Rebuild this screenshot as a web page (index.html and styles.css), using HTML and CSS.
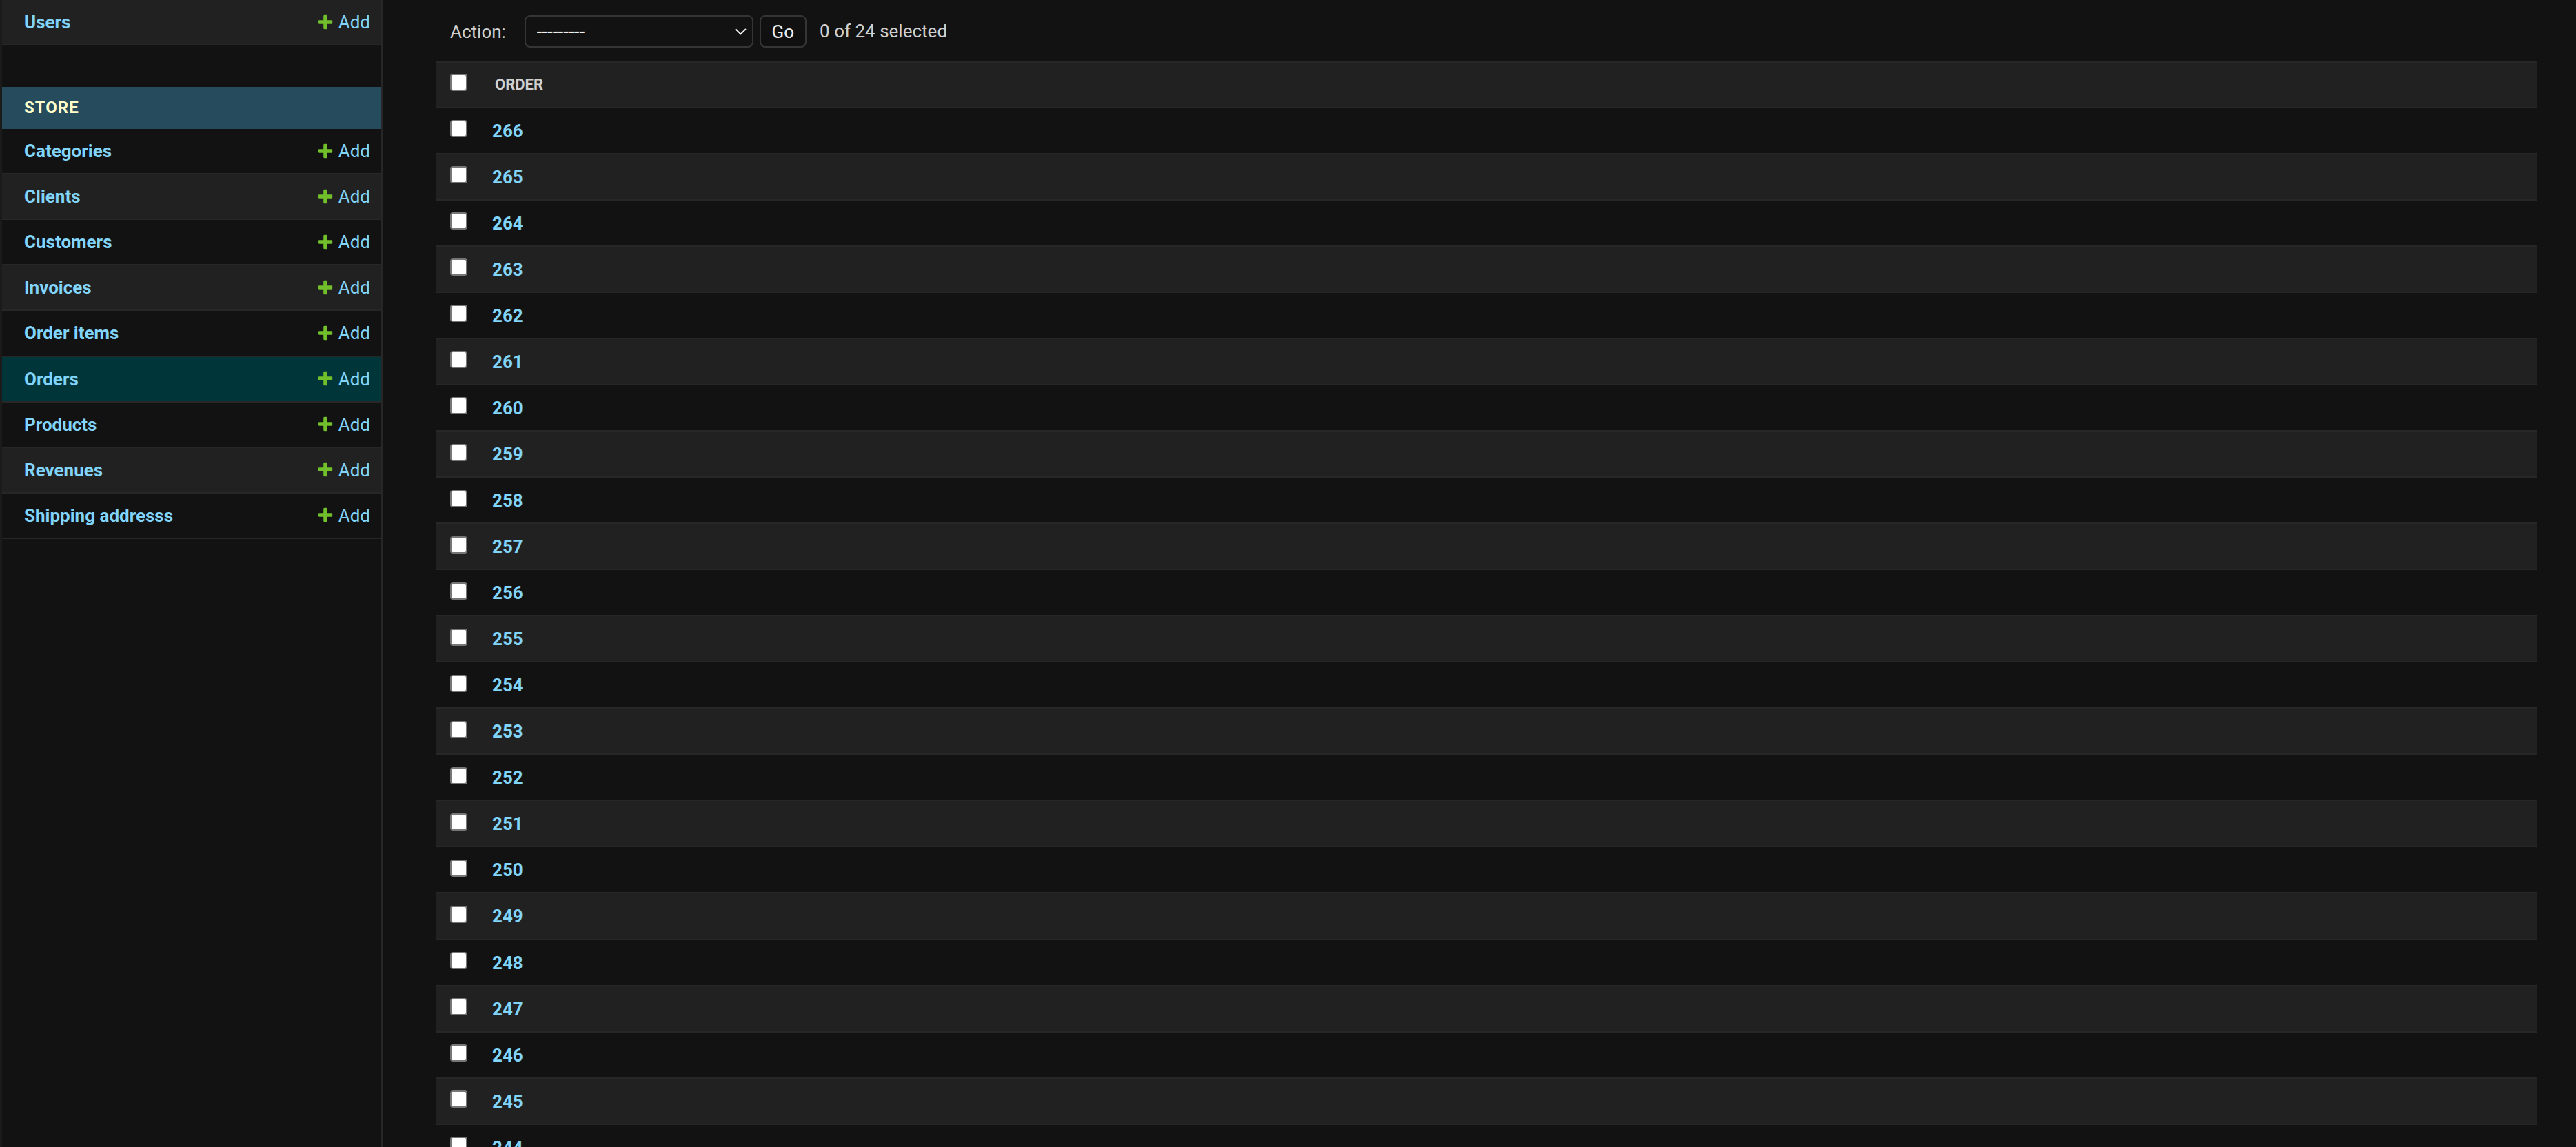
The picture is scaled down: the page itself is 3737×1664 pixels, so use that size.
FILE: index.html
```html
<!DOCTYPE html>
<html lang="en">
<head>
<meta charset="utf-8">
<title>Select order to change | Django site admin</title>
<link rel="stylesheet" href="styles.css">
</head>
<body>
<div class="main">
  <nav class="sidebar">
    <table class="module auth">
      <tbody>
        <tr class="alt"><th scope="row"><a href="#">Users</a></th><td><a class="addlink" href="#"><svg class="icon-add" width="26" height="26" viewBox="0 0 1792 1792"><path fill="#70bf2b" d="M1600 796v192q0 40-28 68t-68 28h-416v416q0 40-28 68t-68 28h-192q-40 0-68-28t-28-68v-416h-416q-40 0-68-28t-28-68v-192q0-40 28-68t68-28h416v-416q0-40 28-68t68-28h192q40 0 68 28t28 68v416h416q40 0 68 28t28 68z"/></svg>Add</a></td></tr>
      </tbody>
    </table>
    <table class="module store">
      <caption><a class="section" href="#">Store</a></caption>
      <tbody>
        <tr><th scope="row"><a href="#">Categories</a></th><td><a class="addlink" href="#"><svg class="icon-add" width="26" height="26" viewBox="0 0 1792 1792"><path fill="#70bf2b" d="M1600 796v192q0 40-28 68t-68 28h-416v416q0 40-28 68t-68 28h-192q-40 0-68-28t-28-68v-416h-416q-40 0-68-28t-28-68v-192q0-40 28-68t68-28h416v-416q0-40 28-68t68-28h192q40 0 68 28t28 68v416h416q40 0 68 28t28 68z"/></svg>Add</a></td></tr>
        <tr><th scope="row"><a href="#">Clients</a></th><td><a class="addlink" href="#"><svg class="icon-add" width="26" height="26" viewBox="0 0 1792 1792"><path fill="#70bf2b" d="M1600 796v192q0 40-28 68t-68 28h-416v416q0 40-28 68t-68 28h-192q-40 0-68-28t-28-68v-416h-416q-40 0-68-28t-28-68v-192q0-40 28-68t68-28h416v-416q0-40 28-68t68-28h192q40 0 68 28t28 68v416h416q40 0 68 28t28 68z"/></svg>Add</a></td></tr>
        <tr><th scope="row"><a href="#">Customers</a></th><td><a class="addlink" href="#"><svg class="icon-add" width="26" height="26" viewBox="0 0 1792 1792"><path fill="#70bf2b" d="M1600 796v192q0 40-28 68t-68 28h-416v416q0 40-28 68t-68 28h-192q-40 0-68-28t-28-68v-416h-416q-40 0-68-28t-28-68v-192q0-40 28-68t68-28h416v-416q0-40 28-68t68-28h192q40 0 68 28t28 68v416h416q40 0 68 28t28 68z"/></svg>Add</a></td></tr>
        <tr><th scope="row"><a href="#">Invoices</a></th><td><a class="addlink" href="#"><svg class="icon-add" width="26" height="26" viewBox="0 0 1792 1792"><path fill="#70bf2b" d="M1600 796v192q0 40-28 68t-68 28h-416v416q0 40-28 68t-68 28h-192q-40 0-68-28t-28-68v-416h-416q-40 0-68-28t-28-68v-192q0-40 28-68t68-28h416v-416q0-40 28-68t68-28h192q40 0 68 28t28 68v416h416q40 0 68 28t28 68z"/></svg>Add</a></td></tr>
        <tr><th scope="row"><a href="#">Order items</a></th><td><a class="addlink" href="#"><svg class="icon-add" width="26" height="26" viewBox="0 0 1792 1792"><path fill="#70bf2b" d="M1600 796v192q0 40-28 68t-68 28h-416v416q0 40-28 68t-68 28h-192q-40 0-68-28t-28-68v-416h-416q-40 0-68-28t-28-68v-192q0-40 28-68t68-28h416v-416q0-40 28-68t68-28h192q40 0 68 28t28 68v416h416q40 0 68 28t28 68z"/></svg>Add</a></td></tr>
        <tr class="current"><th scope="row"><a href="#">Orders</a></th><td><a class="addlink" href="#"><svg class="icon-add" width="26" height="26" viewBox="0 0 1792 1792"><path fill="#70bf2b" d="M1600 796v192q0 40-28 68t-68 28h-416v416q0 40-28 68t-68 28h-192q-40 0-68-28t-28-68v-416h-416q-40 0-68-28t-28-68v-192q0-40 28-68t68-28h416v-416q0-40 28-68t68-28h192q40 0 68 28t28 68v416h416q40 0 68 28t28 68z"/></svg>Add</a></td></tr>
        <tr><th scope="row"><a href="#">Products</a></th><td><a class="addlink" href="#"><svg class="icon-add" width="26" height="26" viewBox="0 0 1792 1792"><path fill="#70bf2b" d="M1600 796v192q0 40-28 68t-68 28h-416v416q0 40-28 68t-68 28h-192q-40 0-68-28t-28-68v-416h-416q-40 0-68-28t-28-68v-192q0-40 28-68t68-28h416v-416q0-40 28-68t68-28h192q40 0 68 28t28 68v416h416q40 0 68 28t28 68z"/></svg>Add</a></td></tr>
        <tr><th scope="row"><a href="#">Revenues</a></th><td><a class="addlink" href="#"><svg class="icon-add" width="26" height="26" viewBox="0 0 1792 1792"><path fill="#70bf2b" d="M1600 796v192q0 40-28 68t-68 28h-416v416q0 40-28 68t-68 28h-192q-40 0-68-28t-28-68v-416h-416q-40 0-68-28t-28-68v-192q0-40 28-68t68-28h416v-416q0-40 28-68t68-28h192q40 0 68 28t28 68v416h416q40 0 68 28t28 68z"/></svg>Add</a></td></tr>
        <tr><th scope="row"><a href="#">Shipping addresss</a></th><td><a class="addlink" href="#"><svg class="icon-add" width="26" height="26" viewBox="0 0 1792 1792"><path fill="#70bf2b" d="M1600 796v192q0 40-28 68t-68 28h-416v416q0 40-28 68t-68 28h-192q-40 0-68-28t-28-68v-416h-416q-40 0-68-28t-28-68v-192q0-40 28-68t68-28h416v-416q0-40 28-68t68-28h192q40 0 68 28t28 68v416h416q40 0 68 28t28 68z"/></svg>Add</a></td></tr>
      </tbody>
    </table>
  </nav>
  <div class="content">
    <div class="actions">
      <label class="action-label" for="action">Action:</label>
      <div class="select-wrap">
        <select id="action" class="action-select"><option>---------</option><option>Delete selected orders</option></select>
        <svg class="chevron" width="17" height="10" viewBox="0 0 17 10"><polyline points="1,1 8.5,8.5 16,1" fill="none" stroke="#eeeeee" stroke-width="1.8"/></svg>
      </div>
      <button class="button" type="button">Go</button>
      <span class="action-counter">0 of 24 selected</span>
    </div>
    <table class="result-list">
      <colgroup><col class="col-cb"><col></colgroup>
      <thead>
        <tr><th class="cb"><input type="checkbox" aria-label="Select all"></th><th class="col-order">Order</th></tr>
      </thead>
      <tbody>
        <tr><td class="cb"><input type="checkbox"></td><th><a href="#">266</a></th></tr>
        <tr><td class="cb"><input type="checkbox"></td><th><a href="#">265</a></th></tr>
        <tr><td class="cb"><input type="checkbox"></td><th><a href="#">264</a></th></tr>
        <tr><td class="cb"><input type="checkbox"></td><th><a href="#">263</a></th></tr>
        <tr><td class="cb"><input type="checkbox"></td><th><a href="#">262</a></th></tr>
        <tr><td class="cb"><input type="checkbox"></td><th><a href="#">261</a></th></tr>
        <tr><td class="cb"><input type="checkbox"></td><th><a href="#">260</a></th></tr>
        <tr><td class="cb"><input type="checkbox"></td><th><a href="#">259</a></th></tr>
        <tr><td class="cb"><input type="checkbox"></td><th><a href="#">258</a></th></tr>
        <tr><td class="cb"><input type="checkbox"></td><th><a href="#">257</a></th></tr>
        <tr><td class="cb"><input type="checkbox"></td><th><a href="#">256</a></th></tr>
        <tr><td class="cb"><input type="checkbox"></td><th><a href="#">255</a></th></tr>
        <tr><td class="cb"><input type="checkbox"></td><th><a href="#">254</a></th></tr>
        <tr><td class="cb"><input type="checkbox"></td><th><a href="#">253</a></th></tr>
        <tr><td class="cb"><input type="checkbox"></td><th><a href="#">252</a></th></tr>
        <tr><td class="cb"><input type="checkbox"></td><th><a href="#">251</a></th></tr>
        <tr><td class="cb"><input type="checkbox"></td><th><a href="#">250</a></th></tr>
        <tr><td class="cb"><input type="checkbox"></td><th><a href="#">249</a></th></tr>
        <tr><td class="cb"><input type="checkbox"></td><th><a href="#">248</a></th></tr>
        <tr><td class="cb"><input type="checkbox"></td><th><a href="#">247</a></th></tr>
        <tr><td class="cb"><input type="checkbox"></td><th><a href="#">246</a></th></tr>
        <tr><td class="cb"><input type="checkbox"></td><th><a href="#">245</a></th></tr>
        <tr><td class="cb"><input type="checkbox"></td><th><a href="#">244</a></th></tr>
        <tr><td class="cb"><input type="checkbox"></td><th><a href="#">243</a></th></tr>
      </tbody>
    </table>
  </div>
</div>
</body>
</html>
```

FILE: styles.css
```css
* { box-sizing: border-box; }

html, body {
  margin: 0;
  padding: 0;
}

body {
  background: #121212;
  color: #eeeeee;
  font-family: Roboto, "Liberation Sans", Arial, sans-serif;
  font-size: 26px;
  height: 1664px;
  overflow: hidden;
}

a {
  color: #81d4fa;
  text-decoration: none;
}

.main {
  display: flex;
  height: 1664px;
}

/* ---------- sidebar ---------- */
.sidebar {
  flex: 0 0 555px;
  border-left: 3px solid #1b1b1b;
  border-right: 2px solid #272727;
  background: #121212;
}

.module {
  width: 100%;
  border-collapse: separate;
  border-spacing: 0;
  margin: 0 0 60.3px;
}

.module caption {
  caption-side: top;
  text-align: left;
  background: #264b5d;
  padding: 16px 32px;
  font-size: 24px;
  line-height: 28.7px;
  font-weight: 700;
  letter-spacing: 1px;
  text-transform: uppercase;
}

.module caption a.section {
  color: #ffffcc;
}

.module th,
.module td {
  padding: 16px;
  line-height: 32.1px;
  border-bottom: 2px solid #272727;
  vertical-align: top;
}

.module th {
  text-align: left;
  padding-left: 32px;
  font-weight: 700;
}

.module td {
  text-align: right;
  white-space: nowrap;
  font-weight: 400;
}

.module tr.alt,
.store tbody tr:nth-child(even) {
  background: #212121;
}

.store tbody tr.current {
  background: #00363a;
}

.icon-add {
  vertical-align: -3.5px;
  margin-right: 6px;
}

/* ---------- content ---------- */
.content {
  flex: 1 1 auto;
  min-width: 0;
  padding: 2px 56px 0 78px;
}

.actions {
  display: flex;
  align-items: center;
  padding: 20px;
  color: #d0d0d0;
  font-size: 26px;
}

.select-wrap {
  position: relative;
  margin-left: 26.7px;
  display: flex;
}

.action-select {
  appearance: none;
  -webkit-appearance: none;
  width: 332.6px;
  height: 47px;
  margin: 0;
  padding: 0 0 0 16px;
  background: #121212;
  color: #eeeeee;
  border: 2px solid #353535;
  border-radius: 8px;
  font-family: Roboto, "Liberation Sans", Arial, sans-serif;
  font-size: 28px;
}

.chevron {
  position: absolute;
  right: 10px;
  top: 19.4px;
  pointer-events: none;
}

.button {
  margin: 0 0 0 8.4px;
  height: 47px;
  padding: 0 16px;
  background: #121212;
  color: #eeeeee;
  border: 2px solid #353535;
  border-radius: 8px;
  box-shadow: 0 -30px 40px -20px rgba(0, 0, 0, 0.15) inset;
  font-family: Roboto, "Liberation Sans", Arial, sans-serif;
  font-size: 26px;
  line-height: 1;
}

.action-counter {
  margin-left: 19px;
  position: relative;
  top: -1px;
}

/* ---------- result list ---------- */
.result-list {
  width: 100%;
  border-collapse: separate;
  border-spacing: 0;
  table-layout: fixed;
}

.col-cb {
  width: 66px;
}

.result-list thead th {
  background: #212121;
  border-top: 2px solid #272727;
  border-bottom: 2px solid #272727;
  padding: 16px 0 15.7px;
  text-align: left;
  vertical-align: top;
  font-size: 22px;
  line-height: 32px;
  font-weight: 700;
  color: #d0d0d0;
  text-transform: uppercase;
}

.result-list thead th.cb {
  padding-left: 20px;
  padding-top: 16.3px;
}

.result-list thead th.col-order {
  padding-left: 19px;
}

.result-list tbody td,
.result-list tbody th {
  padding: 16px 0 15px;
  line-height: 34.05px;
  border-bottom: 2px solid #272727;
  vertical-align: top;
  text-align: left;
}

.result-list tbody td.cb {
  padding-left: 20px;
  padding-top: 17.5px;
}

.result-list tbody th {
  padding-left: 15px;
  font-weight: 700;
}

.result-list tbody tr:nth-child(even) {
  background: #212121;
}

input[type="checkbox"] {
  appearance: none;
  -webkit-appearance: none;
  display: block;
  width: 25px;
  height: 25px;
  margin: 0;
  background: #ffffff;
  border: 2px solid #767676;
  border-radius: 4px;
}
```
